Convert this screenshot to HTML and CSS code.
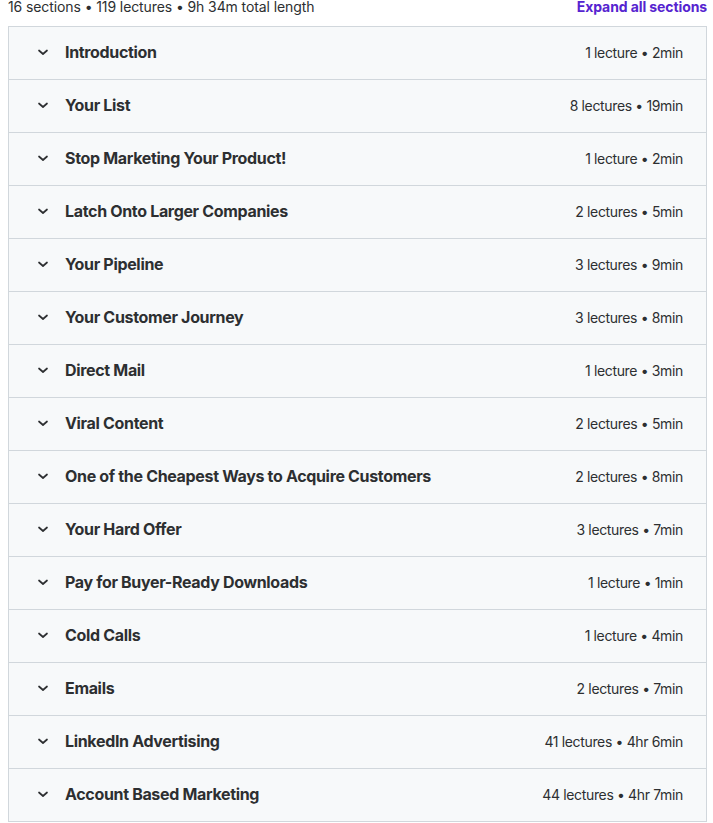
FILE: index.html
```html
<!DOCTYPE html>
<html lang="en">
<head>
  <meta charset="UTF-8">
  <meta name="viewport" content="width=device-width, initial-scale=1.0">
  <title>Course content</title>
  <link rel="stylesheet" href="styles.css">
</head>
<body>
  <div class="curriculum">
    <!-- Summary line -->
    <div class="curriculum-header">
      <span class="summary">16 sections • 119 lectures • 9h 34m total length</span>
      <a class="expand-all" href="#">Expand all sections</a>
    </div>

    <!-- Sections -->
    <div class="sections" id="sections"></div>
  </div>

  <script>
    const sections = [
      ["Introduction", "1 lecture • 2min"],
      ["Your List", "8 lectures • 19min"],
      ["Stop Marketing Your Product!", "1 lecture • 2min"],
      ["Latch Onto Larger Companies", "2 lectures • 5min"],
      ["Your Pipeline", "3 lectures • 9min"],
      ["Your Customer Journey", "3 lectures • 8min"],
      ["Direct Mail", "1 lecture • 3min"],
      ["Viral Content", "2 lectures • 5min"],
      ["One of the Cheapest Ways to Acquire Customers", "2 lectures • 8min"],
      ["Your Hard Offer", "3 lectures • 7min"],
      ["Pay for Buyer-Ready Downloads", "1 lecture • 1min"],
      ["Cold Calls", "1 lecture • 4min"],
      ["Emails", "2 lectures • 7min"],
      ["LinkedIn Advertising", "41 lectures • 4hr 6min"],
      ["Account Based Marketing", "44 lectures • 4hr 7min"]
    ];

    const list = document.getElementById("sections");
    sections.forEach(([title, meta]) => {
      const row = document.createElement("div");
      row.className = "section";
      row.innerHTML = `
        <svg class="chevron" viewBox="0 0 16 16" width="16" height="16">
          <path d="M4 6.5 L8 10 L12 6.5" fill="none" stroke="#2d2f31" stroke-width="1.7" stroke-linecap="round" stroke-linejoin="round"/>
        </svg>
        <span class="section-title">${title}</span>
        <span class="section-meta">${meta}</span>`;
      list.appendChild(row);
    });
  </script>
</body>
</html>
```

FILE: styles.css
```css
body {
  font-family: Inter, "Noto Sans", Arial, sans-serif;
  margin: 0 6px 0 8px;
  padding: 0;
  background-color: #fff;
  color: #2d2f31;
}

.curriculum-header {
  display: flex;
  justify-content: space-between;
  align-items: center;
  height: 20px;
  margin-top: -3px;
  margin-bottom: 9px;
  font-size: 14px;
  line-height: 20px;
  letter-spacing: -0.1px;
}

.summary {
  color: #2d2f31;
}

.expand-all {
  color: #5624d0;
  font-weight: 700;
  text-decoration: none;
}

.sections {
  border: 1px solid #d1d7dc;
  border-bottom: none;
}

.section {
  display: flex;
  align-items: center;
  box-sizing: border-box;
  height: 53px;
  padding: 0 23px 2px 26px;
  background-color: #f7f9fa;
  border-bottom: 1px solid #d1d7dc;
}

.chevron {
  flex: none;
  margin-right: 14px;
}

.section-title {
  flex: 1;
  font-size: 16px;
  font-weight: 700;
  letter-spacing: -0.33px;
  color: #2d2f31;
}

.section-meta {
  font-size: 14px;
  letter-spacing: -0.35px;
  color: #2d2f31;
}
```
